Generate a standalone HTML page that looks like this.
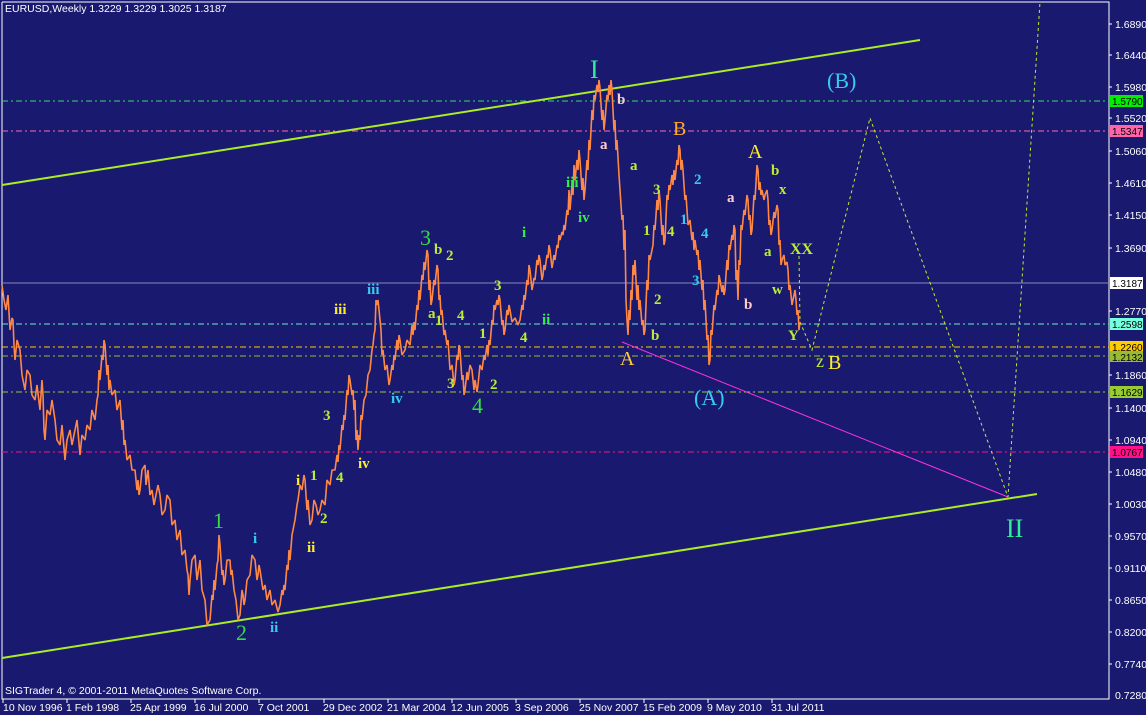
<!DOCTYPE html>
<html><head><meta charset="utf-8"><style>
html,body{margin:0;padding:0;background:#191970;}
svg{display:block}
text{font-family:"Liberation Sans",sans-serif;}
.lb text{font-family:"Liberation Serif",serif;}
text.ax, .ax text{font-family:"Liberation Sans",sans-serif;font-size:10.5px;fill:#fff}
.bx text{font-family:"Liberation Sans",sans-serif;font-size:10px;fill:#000}
.s{font-size:15px;font-weight:bold}
</style></head><body>
<svg width="1146" height="715" viewBox="0 0 1146 715" xmlns="http://www.w3.org/2000/svg">
<rect width="1146" height="715" fill="#191970"/>
<polyline points="2,2 1109,2 1109,699 2,699 2,2" fill="none" stroke="#fff" stroke-width="1"/>
<line x1="2" y1="101" x2="1109" y2="101" stroke="#33dd66" stroke-dasharray="6,3,2,3"/>
<line x1="2" y1="131" x2="1109" y2="131" stroke="#ff66aa" stroke-dasharray="6,3,2,3"/>
<line x1="2" y1="283" x2="1109" y2="283" stroke="#8888bb"/>
<line x1="2" y1="324" x2="1109" y2="324" stroke="#66eecc" stroke-dasharray="6,3,2,3"/>
<line x1="2" y1="347" x2="1109" y2="347" stroke="#ffcc00" stroke-dasharray="6,3,2,3"/>
<line x1="2" y1="356" x2="1109" y2="356" stroke="#99bb33" stroke-dasharray="6,3,2,3"/>
<line x1="2" y1="392" x2="1109" y2="392" stroke="#99cc33" stroke-dasharray="6,3,2,3"/>
<line x1="2" y1="452" x2="1109" y2="452" stroke="#ff1188" stroke-dasharray="6,3,2,3"/>
<line x1="2" y1="185" x2="920" y2="40" stroke="#aaee22" stroke-width="2"/>
<line x1="2" y1="658" x2="1037" y2="494" stroke="#aaee22" stroke-width="2"/>
<line x1="622" y1="342" x2="1008" y2="497" stroke="#ff33dd" stroke-width="1"/>
<polyline points="799,256 800,322 812,350 870,118 1008,497 1040,2" fill="none" stroke="#bbee33" stroke-width="1" stroke-dasharray="3,3"/>
<polyline fill="none" stroke="#ff8844" stroke-width="1.6" stroke-linejoin="bevel" points="2,285 4,300 6,310 8,295 10,330 12,318 13,320 14,345 15,360 17,340 20,350 22,375 25,390 27,370 30,375 32,395 35,400 37,385 40,410 42,380 43,395 44,430 45,440 47,410 50,415 52,400 55,420 57,440 60,445 62,425 65,460 67,440 70,430 72,445 75,430 77,420 80,455 82,435 85,440 87,425 90,430 92,410 95,420 97,400 98,395 99,370 100,380 102,355 103,360 104,340 105,345 107,375 108,365 109,390 110,380 112,395 115,390 117,410 120,400 122,430 123,420 124,445 125,440 127,460 130,455 132,470 135,470 137,490 138,480 139,495 140,490 142,470 145,465 146,485 148,470 150,495 152,490 154,505 155,500 158,485 160,495 162,515 165,510 167,495 170,500 172,525 175,520 177,540 180,530 182,555 185,550 187,570 188,575 189,595 190,580 192,560 195,555 197,580 200,560 202,590 205,600 207,625 210,620 212,595 213,600 214,580 215,590 217,565 218,560 219,535 220,545 222,575 223,570 224,585 225,580 227,560 230,560 231,575 232,570 234,590 236,600 238,620 240,615 242,590 243,595 244,605 245,600 247,580 250,575 252,555 255,560 257,580 258,575 259,565 260,570 263,590 265,585 267,600 270,590 272,605 275,600 278,612 280,605 282,590 283,595 284,585 285,590 287,565 288,570 289,550 290,560 292,535 295,520 297,505 298,500 300,485 302,490 304,475 305,480 307,510 308,500 310,525 312,520 314,500 316,505 318,515 320,510 322,500 325,505 327,480 330,485 332,470 335,470 337,455 338,462 339,445 340,450 342,425 343,430 344,415 345,420 347,390 348,395 349,375 350,380 352,395 353,390 354,410 355,400 356,440 357,430 358,450 359,435 360,440 361,415 362,420 364,400 366,395 368,375 370,370 372,350 373,345 374,335 375,330 376,300 377,305 378,300 380,320 381,330 382,355 383,350 385,370 387,365 389,385 390,380 392,365 393,370 394,355 395,360 397,340 398,350 399,335 400,340 402,355 405,350 407,340 410,345 412,325 413,335 414,322 415,330 417,305 418,310 419,290 420,300 422,275 423,280 424,262 425,270 427,250 428,255 429,290 430,280 431,305 432,300 434,280 435,285 437,265 438,270 439,300 440,295 441,315 442,310 444,335 445,330 447,345 448,340 450,370 452,365 454,385 455,380 457,355 458,360 459,345 460,350 462,380 463,375 464,395 465,390 467,372 468,380 470,365 472,370 474,390 475,380 477,392 478,385 480,365 482,370 484,355 485,360 487,345 488,355 489,340 490,345 492,320 493,325 494,305 495,310 497,300 498,305 499,295 500,300 502,325 503,320 504,335 505,330 507,310 508,315 509,305 510,310 512,322 515,318 518,325 520,320 522,305 523,310 524,295 525,300 527,280 528,285 529,265 530,270 532,290 533,285 534,278 535,280 537,260 538,265 539,255 540,260 542,280 543,275 544,265 545,270 547,255 548,258 549,245 550,250 552,268 553,262 554,255 555,260 557,245 558,248 559,235 560,240 562,232 563,235 564,225 565,230 567,210 568,215 569,190 570,210 572,185 573,195 574,165 575,180 577,160 578,170 579,150 580,160 582,190 583,178 584,200 585,190 587,160 588,170 589,140 590,150 592,110 593,120 594,95 595,100 597,85 598,92 599,80 600,88 602,120 603,110 604,130 605,120 607,95 608,100 609,85 610,95 611,80 612,90 614,130 615,120 616,150 617,140 619,175 620,190 622,220 623,215 624,250 625,230 626,300 627,320 628,335 629,310 630,320 631,290 632,300 633,265 634,275 635,260 637,300 638,285 639,310 640,300 642,325 643,320 644,335 645,330 647,280 648,290 649,255 650,260 652,250 653,245 654,225 655,230 657,200 658,210 659,190 660,200 662,235 663,225 664,245 665,240 667,195 668,200 669,185 670,190 672,175 673,185 674,170 675,180 677,160 678,165 679,145 680,150 681,170 682,160 683,170 685,200 686,195 688,225 690,220 692,240 693,232 694,250 695,240 697,255 698,250 699,270 700,260 702,290 703,280 704,310 705,300 707,340 708,335 709,365 710,360 711,330 712,335 714,305 715,310 717,290 718,295 719,275 720,280 722,292 723,285 724,295 725,290 727,260 728,270 729,245 730,250 732,235 733,240 734,225 735,230 736,280 737,270 738,300 739,260 740,265 741,225 742,230 744,210 745,215 747,195 748,200 749,220 750,215 751,235 752,230 754,195 755,200 757,165 758,170 759,190 760,182 761,195 762,190 764,200 765,195 767,190 768,200 769,225 770,220 771,235 772,230 774,212 775,218 777,205 778,210 779,245 780,240 781,265 782,260 784,255 785,265 787,262 788,270 789,290 790,285 792,305 793,300 795,290 796,300 797,315 798,310 799,330 800,322"/>
<g class="lb">
<g fill="#33ee99"><text x="590" y="78" font-size="26">I</text><text x="1006" y="537" font-size="26">II</text></g>
<g fill="#33ccee" font-size="22"><text x="827" y="88">(B)</text><text x="694" y="405">(A)</text></g>
<g font-size="20"><text x="673" y="135" fill="#ffaa22">B</text><text x="748" y="158" fill="#ffee22">A</text><text x="620" y="365" fill="#ffcc33">A</text><text x="816" y="367" fill="#bbee33" font-size="18">z</text><text x="828" y="369" fill="#ffee22">B</text></g>
<g font-size="22" fill="#33dd44"><text x="420" y="245">3</text><text x="472" y="413">4</text><text x="236" y="640">2</text><text x="213" y="528">1</text></g>
<g class="s" font-size="16">
<text x="566" y="187" fill="#33ee44">iii</text><text x="578" y="222" fill="#33ee44">iv</text>
<text x="367" y="294" fill="#33ccee">iii</text><text x="391" y="403" fill="#33ccee">iv</text>
<text x="334" y="314" fill="#ffee22">iii</text><text x="358" y="468" fill="#ffee22">iv</text>
<text x="296" y="485" fill="#ffee22">i</text><text x="307" y="552" fill="#ffee22">ii</text>
<text x="253" y="543" fill="#33ccee">i</text><text x="270" y="632" fill="#33ccee">ii</text>
<text x="522" y="237" fill="#33ee44">i</text><text x="542" y="324" fill="#33ee44">ii</text>
</g>
<g class="s" fill="#bbee33">
<text x="434" y="254">b</text><text x="446" y="260">2</text><text x="428" y="318">a</text><text x="435" y="325">1</text><text x="457" y="320">4</text><text x="479" y="338">1</text><text x="447" y="388">3</text><text x="490" y="389">2</text><text x="494" y="290">3</text><text x="520" y="342">4</text>
<text x="323" y="420">3</text><text x="310" y="480">1</text><text x="336" y="482">4</text><text x="320" y="523">2</text>
<text x="630" y="170">a</text><text x="653" y="194">3</text><text x="643" y="235">1</text><text x="667" y="236">4</text><text x="654" y="304">2</text><text x="651" y="340">b</text>
<text x="771" y="175">b</text><text x="779" y="194">x</text><text x="764" y="256">a</text><text x="790" y="254" font-size="16">XX</text><text x="772" y="294">w</text><text x="788" y="340">Y</text>
</g>
<g class="s" fill="#33ccee"><text x="694" y="184">2</text><text x="680" y="224">1</text><text x="701" y="238">4</text><text x="692" y="285">3</text></g>
<g class="s" fill="#ffcccc"><text x="617" y="104">b</text><text x="600" y="149">a</text><text x="727" y="202">a</text><text x="744" y="309">b</text></g>
</g>
<g stroke="#fff">
<line x1="1109" y1="24" x2="1112" y2="24"/><line x1="1109" y1="55" x2="1112" y2="55"/><line x1="1109" y1="87" x2="1112" y2="87"/><line x1="1109" y1="118" x2="1112" y2="118"/><line x1="1109" y1="151" x2="1112" y2="151"/><line x1="1109" y1="183" x2="1112" y2="183"/><line x1="1109" y1="215" x2="1112" y2="215"/><line x1="1109" y1="248" x2="1112" y2="248"/><line x1="1109" y1="311" x2="1112" y2="311"/><line x1="1109" y1="375" x2="1112" y2="375"/><line x1="1109" y1="408" x2="1112" y2="408"/><line x1="1109" y1="440" x2="1112" y2="440"/><line x1="1109" y1="472" x2="1112" y2="472"/><line x1="1109" y1="504" x2="1112" y2="504"/><line x1="1109" y1="536" x2="1112" y2="536"/><line x1="1109" y1="568" x2="1112" y2="568"/><line x1="1109" y1="600" x2="1112" y2="600"/><line x1="1109" y1="632" x2="1112" y2="632"/><line x1="1109" y1="664" x2="1112" y2="664"/>
<line x1="3" y1="699" x2="3" y2="703"/><line x1="67" y1="699" x2="67" y2="703"/><line x1="131" y1="699" x2="131" y2="703"/><line x1="195" y1="699" x2="195" y2="703"/><line x1="259" y1="699" x2="259" y2="703"/><line x1="324" y1="699" x2="324" y2="703"/><line x1="388" y1="699" x2="388" y2="703"/><line x1="452" y1="699" x2="452" y2="703"/><line x1="516" y1="699" x2="516" y2="703"/><line x1="580" y1="699" x2="580" y2="703"/><line x1="644" y1="699" x2="644" y2="703"/><line x1="708" y1="699" x2="708" y2="703"/><line x1="772" y1="699" x2="772" y2="703"/>
</g>
<g class="ax">
<text x="1115" y="28">1.6890</text><text x="1115" y="59">1.6440</text><text x="1115" y="91">1.5980</text><text x="1115" y="122">1.5520</text><text x="1115" y="155">1.5060</text><text x="1115" y="187">1.4610</text><text x="1115" y="219">1.4150</text><text x="1115" y="252">1.3690</text><text x="1115" y="315">1.2770</text><text x="1115" y="379">1.1860</text><text x="1115" y="412">1.1400</text><text x="1115" y="444">1.0940</text><text x="1115" y="476">1.0480</text><text x="1115" y="508">1.0030</text><text x="1115" y="540">0.9570</text><text x="1115" y="572">0.9110</text><text x="1115" y="604">0.8650</text><text x="1115" y="636">0.8200</text><text x="1115" y="668">0.7740</text><text x="1115" y="699">0.7280</text>
</g>
<g class="bx">
<rect x="1110" y="95" width="33" height="12" fill="#00ee00"/><text x="1112" y="105">1.5790</text>
<rect x="1110" y="125" width="33" height="12" fill="#ff66aa"/><text x="1112" y="135">1.5347</text>
<rect x="1110" y="277" width="33" height="12" fill="#fff"/><text x="1112" y="287">1.3187</text>
<rect x="1110" y="318" width="33" height="12" fill="#77ffdd"/><text x="1112" y="328">1.2598</text>
<rect x="1110" y="341" width="33" height="11" fill="#ffcc00"/><text x="1112" y="351">1.2260</text>
<rect x="1110" y="351" width="33" height="11" fill="#99bb33"/><text x="1112" y="361">1.2132</text>
<rect x="1110" y="386" width="33" height="12" fill="#99cc33"/><text x="1112" y="396">1.1629</text>
<rect x="1110" y="446" width="33" height="12" fill="#ff1188"/><text x="1112" y="456">1.0767</text>
</g>
<g class="ax">
<text x="3" y="711">10 Nov 1996</text><text x="66" y="711">1 Feb 1998</text><text x="130" y="711">25 Apr 1999</text><text x="194" y="711">16 Jul 2000</text><text x="258" y="711">7 Oct 2001</text><text x="323" y="711">29 Dec 2002</text><text x="387" y="711">21 Mar 2004</text><text x="451" y="711">12 Jun 2005</text><text x="515" y="711">3 Sep 2006</text><text x="579" y="711">25 Nov 2007</text><text x="643" y="711">15 Feb 2009</text><text x="707" y="711">9 May 2010</text><text x="771" y="711">31 Jul 2011</text>
</g>
<text x="5" y="12" class="ax">EURUSD,Weekly  1.3229 1.3229 1.3025 1.3187</text>
<text x="5" y="694" class="ax">SIGTrader 4, © 2001-2011 MetaQuotes Software Corp.</text>
</svg>
</body></html>
